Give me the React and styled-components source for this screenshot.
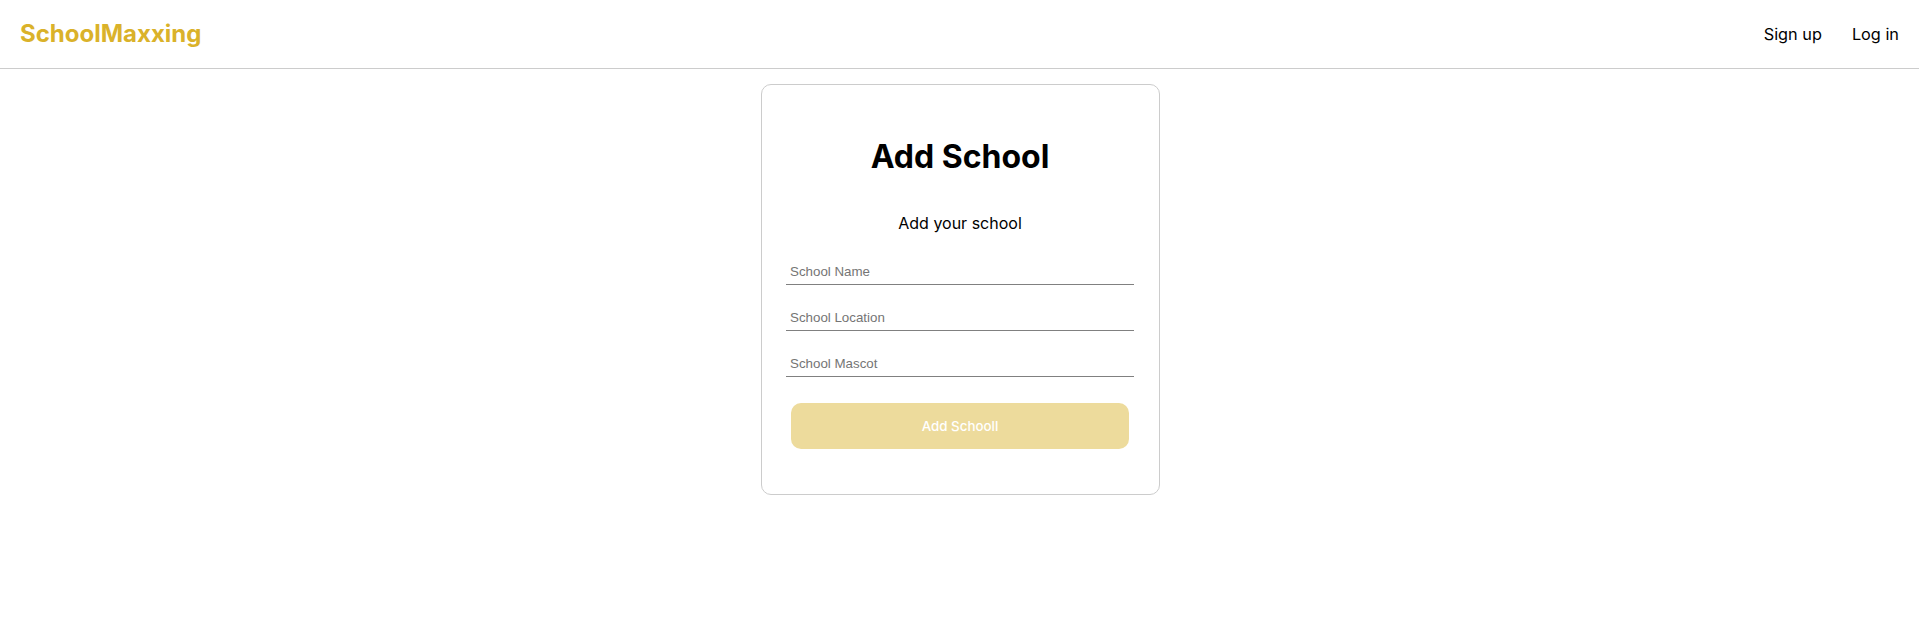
import React, { useState } from 'react'
import styled, { createGlobalStyle } from 'styled-components'

const GlobalStyle = createGlobalStyle`
  * { box-sizing: border-box; }
  body {
    margin: 0;
    background: #ffffff;
    font-family: Inter, "Noto Sans", sans-serif;
    color: #000000;
  }
`

function Navbar() {
  return (
    <Header>
      <Brand href="#">SchoolMaxxing</Brand>
      <NavLinks>
        <NavLink href="#">Sign up</NavLink>
        <NavLink href="#">Log in</NavLink>
      </NavLinks>
    </Header>
  )
}

function AddSchoolForm() {
  const [form, setForm] = useState({ name: '', location: '', mascot: '' })
  const ready = form.name && form.location && form.mascot

  const update = key => e => setForm({ ...form, [key]: e.target.value })

  return (
    <Card onSubmit={e => e.preventDefault()}>
      <Title>Add School</Title>
      <Subtitle>Add your school</Subtitle>
      <Field placeholder="School Name" value={form.name} onChange={update('name')} />
      <Field placeholder="School Location" value={form.location} onChange={update('location')} />
      <Field placeholder="School Mascot" value={form.mascot} onChange={update('mascot')} />
      <SubmitButton type="submit" disabled={!ready}>Add Schooll</SubmitButton>
    </Card>
  )
}

export default function App() {
  return (
    <>
      <GlobalStyle />
      <Navbar />
      <Main>
        <AddSchoolForm />
      </Main>
    </>
  )
}

const Header = styled.header`
  height: 69px;
  display: flex;
  align-items: center;
  justify-content: space-between;
  padding: 0 20px;
  border-bottom: 1px solid #cccccc;
`

const Brand = styled.a`
  font-size: 24px;
  font-weight: 700;
  color: #dab22a;
  text-decoration: none;
  margin-top: -2px;
`

const NavLinks = styled.nav`
  display: flex;
  gap: 30px;
`

const NavLink = styled.a`
  font-size: 16.3px;
  color: #000000;
  text-decoration: none;
  margin-top: -1px;
`

const Main = styled.main`
  display: flex;
  justify-content: center;
  padding-top: 15px;
`

const Card = styled.form`
  width: 399px;
  margin-left: 2px;
  display: flex;
  flex-direction: column;
  padding: 24px 25px 24px 24px;
  border: 1px solid #cccccc;
  border-radius: 10px;
`

const Title = styled.h1`
  margin: 28px 0 0;
  font-size: 32px;
  font-weight: 700;
  text-align: center;
`

const Subtitle = styled.p`
  margin: 37px 0 25px;
  font-size: 16px;
  text-align: center;
`

const Field = styled.input`
  width: 100%;
  margin-bottom: 19px;
  padding: 6px 4px 5px 4px;
  border: none;
  border-bottom: 1px solid #808080;
  outline: none;
  font-family: "Liberation Sans", Arial, sans-serif;
  font-size: 13.333px;
  color: #333333;
  background: transparent;

  &::placeholder {
    color: #757575;
  }
`

const SubmitButton = styled.button`
  height: 46px;
  margin: 7px 5px 21px;
  border: none;
  border-radius: 10px;
  background: #dab22a;
  color: #ffffff;
  font-family: Inter, sans-serif;
  font-size: 13.333px;
  font-weight: 500;
  cursor: pointer;

  &:disabled {
    background: #eddb9c;
    cursor: default;
  }
`
